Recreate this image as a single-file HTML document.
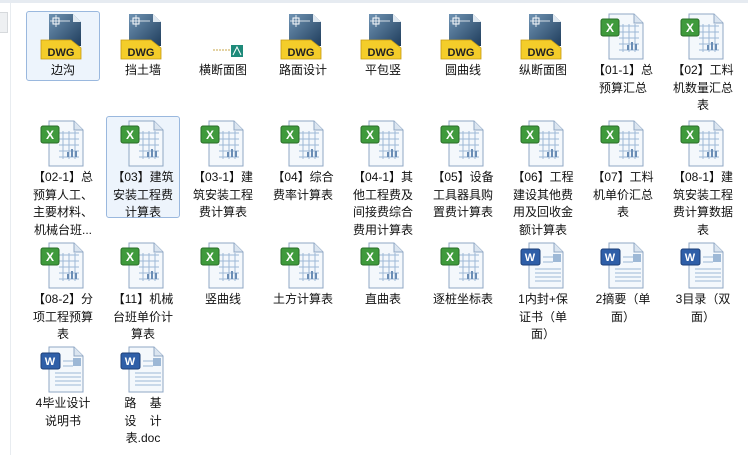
<!DOCTYPE html>
<html><head><meta charset="utf-8">
<style>
*{margin:0;padding:0;box-sizing:border-box}
body{width:748px;height:455px;background:#fff;position:relative;overflow:hidden;font-family:"Liberation Sans","Noto Sans CJK SC",sans-serif;font-size:12px;color:#111}
.it{position:absolute;width:76px;text-align:center}
.it svg{display:block;margin:0 auto}
.lb{line-height:17.5px;margin-top:2px;white-space:nowrap}
.sel{position:absolute;border:1px solid #9ab8de;border-radius:3px;background:#edf4fc}
</style></head><body>
<div style="position:absolute;left:0;top:0;width:748px;height:3px;background:#e6ebf1"></div>
<div style="position:absolute;left:10px;top:3px;width:1px;height:452px;background:#e8ecf0"></div>
<div style="position:absolute;left:0;top:12px;width:8px;height:21px;background:#eef0f2;border:1px solid #d6d9dc;border-left:none"></div>
<div class="sel" style="left:26px;top:11px;width:74px;height:70px"></div>
<div class="sel" style="left:106px;top:116px;width:74px;height:102px"></div>

<svg width="0" height="0" style="position:absolute">
<defs>
<linearGradient id="dg" x1="0" y1="0" x2="1" y2="1"><stop offset="0" stop-color="#6f93b3"/><stop offset="1" stop-color="#1f3d5c"/></linearGradient>
<symbol id="dwg" viewBox="0 0 48 48">
<path d="M10 2h24l8 8v24H10z" fill="url(#dg)"/>
<path d="M34 2v8h8z" fill="#dfe8f0"/>
<rect x="14" y="6" width="6" height="6" fill="none" stroke="#fff" stroke-width="1"/>
<path d="M17 3v12M11 9h20" stroke="#fff" stroke-width="0.8"/>
<path d="M2 28h30l10 8v11H2z" fill="#f4cd2a" stroke="#c79a10" stroke-width="0.8"/>
</symbol>
<symbol id="xls" viewBox="0 0 48 48">
<path d="M10 2h25l9 9v36H10z" fill="#f4f8fc" stroke="#8fa7c4"/>
<path d="M35 2v9h9" fill="#dbe5f0" stroke="#8fa7c4"/>
<g stroke="#9db8d6" stroke-width="1"><path d="M20 14h20M20 20h20M20 26h20M20 32h20M20 38h20M24 12v28M30 12v28M36 12v28"/></g>
<path d="M28 38v-5h2v5M32 38v-8h2v8M36 38v-6h2v6" fill="#6a8db5"/>
<rect x="2" y="7" width="18" height="17" rx="2" fill="#3f9a3c" stroke="#2a6e28"/>
<text x="11" y="20" font-size="12" font-weight="bold" fill="#fff" text-anchor="middle" font-family="Liberation Sans">X</text>
</symbol>
<symbol id="doc" viewBox="0 0 48 48">
<path d="M10 2h25l9 9v36H10z" fill="#f4f8fc" stroke="#8fa7c4"/>
<path d="M35 2v9h9" fill="#dbe5f0" stroke="#8fa7c4"/>
<g stroke="#9db8d6" stroke-width="1"><path d="M24 16h10M24 21h10M16 28h26M16 32h26M16 36h26M16 40h26"/></g>
<rect x="34" y="13" width="8" height="8" fill="#9db8d6"/>
<rect x="2" y="8" width="19" height="16" rx="2" fill="#2f5fa8" stroke="#1d3f78"/>
<text x="11" y="20" font-size="11" font-weight="bold" fill="#fff" text-anchor="middle" font-family="Liberation Sans">W</text>
</symbol>
</defs></svg>

<!-- Row 1 -->
<div class="it" style="left:25px;top:12px"><svg width="48" height="48"><use href="#dwg"/><text x="22" y="44" font-size="11" font-weight="bold" fill="#222" text-anchor="middle" font-family="Liberation Sans">DWG</text></svg><div class="lb">边沟</div></div>
<div class="it" style="left:105px;top:12px"><svg width="48" height="48"><use href="#dwg"/><text x="22" y="44" font-size="11" font-weight="bold" fill="#222" text-anchor="middle" font-family="Liberation Sans">DWG</text></svg><div class="lb">挡土墙</div></div>
<div class="it" style="left:185px;top:12px"><svg width="48" height="48"><path d="M14 38h18" stroke="#c9a74a" stroke-dasharray="2 1"/><rect x="32" y="33" width="12" height="12" fill="#1e8a7a"/><path d="M34 43l4-8 4 8" stroke="#fff" fill="none"/></svg><div class="lb">横断面图</div></div>
<div class="it" style="left:265px;top:12px"><svg width="48" height="48"><use href="#dwg"/><text x="22" y="44" font-size="11" font-weight="bold" fill="#222" text-anchor="middle" font-family="Liberation Sans">DWG</text></svg><div class="lb">路面设计</div></div>
<div class="it" style="left:345px;top:12px"><svg width="48" height="48"><use href="#dwg"/><text x="22" y="44" font-size="11" font-weight="bold" fill="#222" text-anchor="middle" font-family="Liberation Sans">DWG</text></svg><div class="lb">平包竖</div></div>
<div class="it" style="left:425px;top:12px"><svg width="48" height="48"><use href="#dwg"/><text x="22" y="44" font-size="11" font-weight="bold" fill="#222" text-anchor="middle" font-family="Liberation Sans">DWG</text></svg><div class="lb">圆曲线</div></div>
<div class="it" style="left:505px;top:12px"><svg width="48" height="48"><use href="#dwg"/><text x="22" y="44" font-size="11" font-weight="bold" fill="#222" text-anchor="middle" font-family="Liberation Sans">DWG</text></svg><div class="lb">纵断面图</div></div>
<div class="it" style="left:585px;top:12px"><svg width="48" height="48"><use href="#xls"/></svg><div class="lb">【01-1】总<br>预算汇总</div></div>
<div class="it" style="left:665px;top:12px"><svg width="48" height="48"><use href="#xls"/></svg><div class="lb">【02】工料<br>机数量汇总<br>表</div></div>

<!-- Row 2 -->
<div class="it" style="left:25px;top:119px"><svg width="48" height="48"><use href="#xls"/></svg><div class="lb">【02-1】总<br>预算人工、<br>主要材料、<br>机械台班...</div></div>
<div class="it" style="left:105px;top:119px"><svg width="48" height="48"><use href="#xls"/></svg><div class="lb">【03】建筑<br>安装工程费<br>计算表</div></div>
<div class="it" style="left:185px;top:119px"><svg width="48" height="48"><use href="#xls"/></svg><div class="lb">【03-1】建<br>筑安装工程<br>费计算表</div></div>
<div class="it" style="left:265px;top:119px"><svg width="48" height="48"><use href="#xls"/></svg><div class="lb">【04】综合<br>费率计算表</div></div>
<div class="it" style="left:345px;top:119px"><svg width="48" height="48"><use href="#xls"/></svg><div class="lb">【04-1】其<br>他工程费及<br>间接费综合<br>费用计算表</div></div>
<div class="it" style="left:425px;top:119px"><svg width="48" height="48"><use href="#xls"/></svg><div class="lb">【05】设备<br>工具器具购<br>置费计算表</div></div>
<div class="it" style="left:505px;top:119px"><svg width="48" height="48"><use href="#xls"/></svg><div class="lb">【06】工程<br>建设其他费<br>用及回收金<br>额计算表</div></div>
<div class="it" style="left:585px;top:119px"><svg width="48" height="48"><use href="#xls"/></svg><div class="lb">【07】工料<br>机单价汇总<br>表</div></div>
<div class="it" style="left:665px;top:119px"><svg width="48" height="48"><use href="#xls"/></svg><div class="lb">【08-1】建<br>筑安装工程<br>费计算数据<br>表</div></div>

<!-- Row 3 -->
<div class="it" style="left:25px;top:241px"><svg width="48" height="48"><use href="#xls"/></svg><div class="lb">【08-2】分<br>项工程预算<br>表</div></div>
<div class="it" style="left:105px;top:241px"><svg width="48" height="48"><use href="#xls"/></svg><div class="lb">【11】机械<br>台班单价计<br>算表</div></div>
<div class="it" style="left:185px;top:241px"><svg width="48" height="48"><use href="#xls"/></svg><div class="lb">竖曲线</div></div>
<div class="it" style="left:265px;top:241px"><svg width="48" height="48"><use href="#xls"/></svg><div class="lb">土方计算表</div></div>
<div class="it" style="left:345px;top:241px"><svg width="48" height="48"><use href="#xls"/></svg><div class="lb">直曲表</div></div>
<div class="it" style="left:425px;top:241px"><svg width="48" height="48"><use href="#xls"/></svg><div class="lb">逐桩坐标表</div></div>
<div class="it" style="left:505px;top:241px"><svg width="48" height="48"><use href="#doc"/></svg><div class="lb">1内封+保<br>证书（单<br>面）</div></div>
<div class="it" style="left:585px;top:241px"><svg width="48" height="48"><use href="#doc"/></svg><div class="lb">2摘要（单<br>面）</div></div>
<div class="it" style="left:665px;top:241px"><svg width="48" height="48"><use href="#doc"/></svg><div class="lb">3目录（双<br>面）</div></div>

<!-- Row 4 -->
<div class="it" style="left:25px;top:345px"><svg width="48" height="48"><use href="#doc"/></svg><div class="lb">4毕业设计<br>说明书</div></div>
<div class="it" style="left:105px;top:345px"><svg width="48" height="48"><use href="#doc"/></svg><div class="lb">路&nbsp;&nbsp;&nbsp;&nbsp;基<br>设&nbsp;&nbsp;&nbsp;&nbsp;计<br>表.doc</div></div>
</body></html>
